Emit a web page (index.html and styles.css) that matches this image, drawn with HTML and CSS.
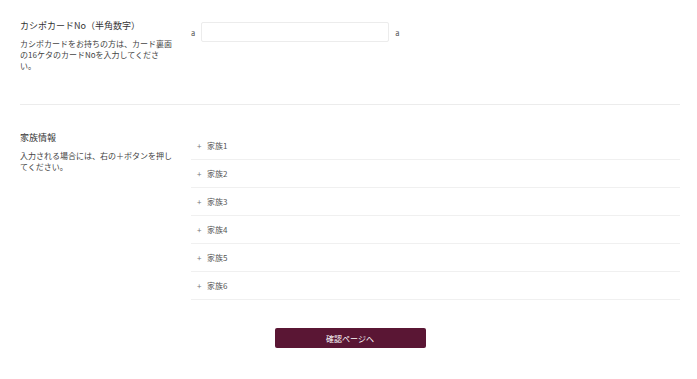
FILE: index.html
```html
<!DOCTYPE html>
<html>
    <head>
        <link rel="stylesheet" href="styles.css">
        <title>会員登録</title>
        <meta charset="utf-8">
        <meta name="viewport" content="width=device-width, initial-scale=1">
    </head>
    <body>
        <form class="form">
            <div class="section first">
                <div class="label">
                    <div class="label-title">カシポカードNo（半角数字）</div>
                    <div class="label-desc">カシポカードをお持ちの方は、カード裏面の16ケタのカードNoを入力してください。</div>
                </div>
                <div class="field">
                    <div class="input-row">
                        <span class="affix">a</span>
                        <input type="text" class="text-input">
                        <span class="affix">a</span>
                    </div>
                </div>
            </div>

            <div class="section second">
                <div class="label">
                    <div class="label-title">家族情報</div>
                    <div class="label-desc">入力される場合には、右の＋ボタンを押してください。</div>
                </div>
                <div class="field">
                    <div class="family-row"><span class="plus">+</span>家族1</div>
                    <div class="family-row"><span class="plus">+</span>家族2</div>
                    <div class="family-row"><span class="plus">+</span>家族3</div>
                    <div class="family-row"><span class="plus">+</span>家族4</div>
                    <div class="family-row"><span class="plus">+</span>家族5</div>
                    <div class="family-row"><span class="plus">+</span>家族6</div>
                </div>
            </div>

            <div class="actions">
                <button type="button" class="submit">確認ページへ</button>
            </div>
        </form>
    </body>
</html>
```

FILE: styles.css
```css
body {
    margin: 0;
    background: #fff;
    font-family: "Noto Sans CJK JP", "Noto Sans", sans-serif;
    color: #333;
}

.form {
    padding: 0 17px 0 20px;
}

.section {
    display: flex;
}
.section.first {
    padding: 20px 0 33px;
    border-bottom: 1px solid #ececec;
}
.section.second {
    padding-top: 27px;
}

.label {
    width: 171px;
    flex-shrink: 0;
}
.label-title {
    font-size: 9px;
    line-height: 12px;
    color: #333;
}
.label-desc {
    width: 153px;
    margin-top: 6px;
    font-size: 8px;
    line-height: 11px;
    color: #444;
}

.field {
    flex: 1;
}

.input-row {
    display: flex;
    align-items: center;
    margin-top: 2px;
    font-size: 7.5px;
    color: #555;
}
.text-input {
    width: 188px;
    height: 20px;
    box-sizing: border-box;
    margin: 0 6px 0 6px;
    border: 1px solid #ececec;
    border-radius: 2px;
    outline: none;
}

.family-row {
    height: 28px;
    box-sizing: border-box;
    display: flex;
    align-items: center;
    padding-left: 6px;
    border-bottom: 1px solid #f0f0f0;
    font-size: 8px;
    color: #555;
}
.plus {
    width: 10px;
    font-size: 8px;
    color: #777;
}

.actions {
    display: flex;
    justify-content: center;
    padding-top: 28px;
}
.submit {
    width: 151px;
    height: 20px;
    border: none;
    border-radius: 2px;
    background-color: #5a1634;
    color: #fff;
    font-family: "Noto Sans CJK JP", "Noto Sans", sans-serif;
    font-size: 8px;
    cursor: pointer;
}
```
